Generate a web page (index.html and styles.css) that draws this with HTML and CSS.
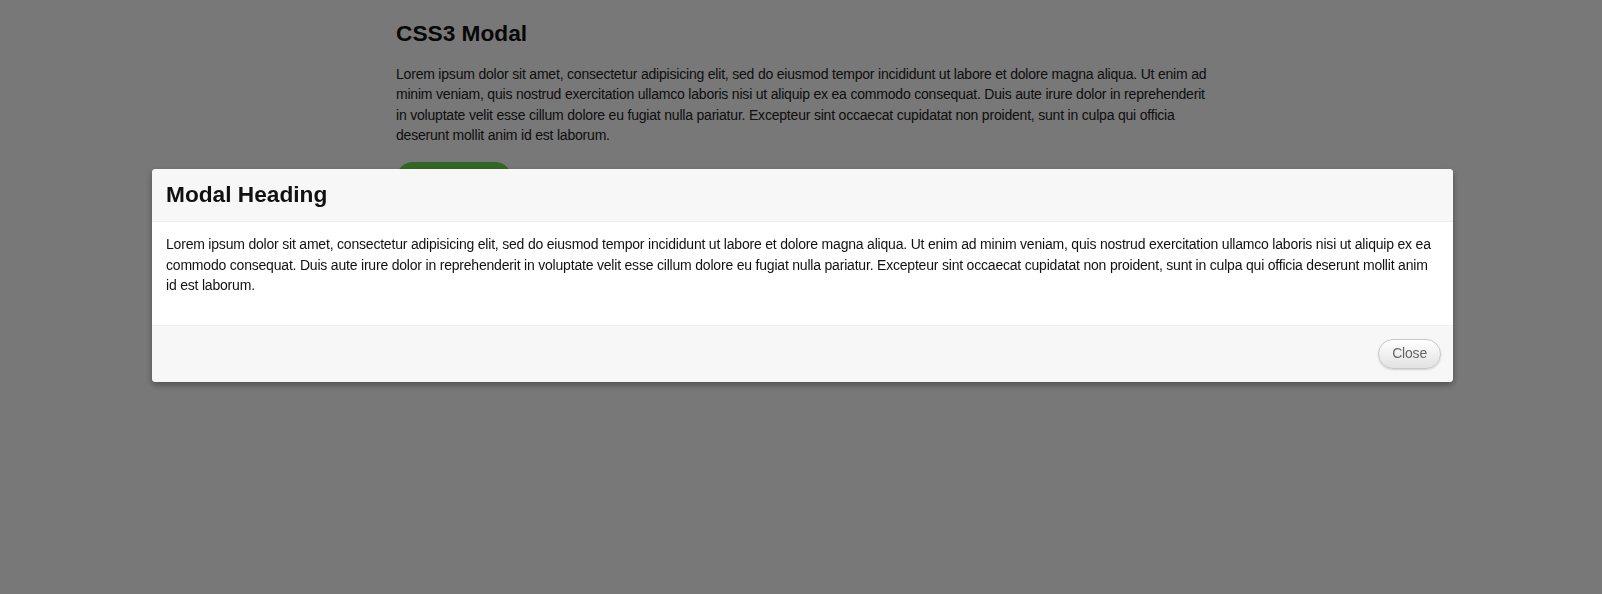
FILE: index.html
```html
<!DOCTYPE html>
<html lang="en">
<head>
<meta charset="utf-8">
<title>CSS3 Modal</title>
<link rel="stylesheet" href="styles.css">
</head>
<body>
<div class="container">
  <h1 class="title">CSS3 Modal</h1>
  <p class="intro">Lorem ipsum dolor sit amet, consectetur adipisicing elit, sed do eiusmod tempor incididunt ut labore et dolore magna aliqua. Ut enim ad minim veniam, quis nostrud exercitation ullamco laboris nisi ut aliquip ex ea commodo consequat. Duis aute irure dolor in reprehenderit in voluptate velit esse cillum dolore eu fugiat nulla pariatur. Excepteur sint occaecat cupidatat non proident, sunt in culpa qui officia deserunt mollit anim id est laborum.</p>
  <a class="btn-open" href="#modal">Open Modal</a>
</div>
<div class="overlay"></div>
<div class="modal">
  <div class="modal-header">
    <h2 class="modal-title">Modal Heading</h2>
  </div>
  <div class="modal-body">
    <p>Lorem ipsum dolor sit amet, consectetur adipisicing elit, sed do eiusmod tempor incididunt ut labore et dolore magna aliqua. Ut enim ad minim veniam, quis nostrud exercitation ullamco laboris nisi ut aliquip ex ea commodo consequat. Duis aute irure dolor in reprehenderit in voluptate velit esse cillum dolore eu fugiat nulla pariatur. Excepteur sint occaecat cupidatat non proident, sunt in culpa qui officia deserunt mollit anim id est laborum.</p>
  </div>
  <div class="modal-footer">
    <a class="btn-close" href="#">Close</a>
  </div>
</div>
</body>
</html>
```
FILE: styles.css
```css
html, body {
  height: 100%;
}
body {
  margin: 0;
  padding: 8px;
  box-sizing: border-box;
  background: #ffffff;
  color: #222222;
  font-family: "Liberation Sans", Arial, sans-serif;
  font-size: 14px;
  line-height: 20.3px;
  letter-spacing: -0.2px;
}
.container {
  width: 814px;
  margin: 0 auto;
  padding-left: 4px;
}
.title {
  font-size: 22.7px;
  line-height: 27px;
  font-weight: bold;
  letter-spacing: 0;
  color: #111;
  margin: 12px 0 17px;
}
.intro {
  margin: 0 0 17px;
}
.btn-open {
  display: inline-block;
  width: 116px;
  height: 34px;
  line-height: 34px;
  text-align: center;
  border-radius: 17px;
  background: rgb(112, 218, 80);
  color: #fff;
  text-decoration: none;
}
.overlay {
  position: fixed;
  inset: 0;
  background: rgba(0, 0, 0, 0.53);
}
.modal {
  position: fixed;
  top: 169px;
  left: 152px;
  width: 1301px;
  background: #fff;
  border-radius: 4px;
  box-shadow: 0 3px 7px rgba(0, 0, 0, 0.35);
  overflow: hidden;
}
.modal-header {
  background: #f7f7f7;
  border-bottom: 1px solid #efefef;
  padding: 12px 14px 13px;
}
.modal-title {
  margin: 0;
  font-size: 22.7px;
  line-height: 27px;
  font-weight: bold;
  letter-spacing: 0;
  color: #111;
}
.modal-body {
  padding: 12px 14px 29px 14px;
  line-height: 20.5px;
  color: #111;
}
.modal-body p {
  margin: 0;
}
.modal-footer {
  background: #f7f7f7;
  border-top: 1px solid #efefef;
  padding: 13px 12px 13px;
  display: flex;
  justify-content: flex-end;
}
.btn-close {
  display: inline-flex;
  align-items: center;
  height: 30px;
  box-sizing: border-box;
  padding: 0 13px;
  border: 1px solid #c8c8c8;
  border-radius: 15px;
  background: linear-gradient(#ffffff, #e2e2e2);
  box-shadow: 0 1px 2px rgba(0, 0, 0, 0.15);
  color: #666;
  font-size: 14px;
  text-decoration: none;
}
```
